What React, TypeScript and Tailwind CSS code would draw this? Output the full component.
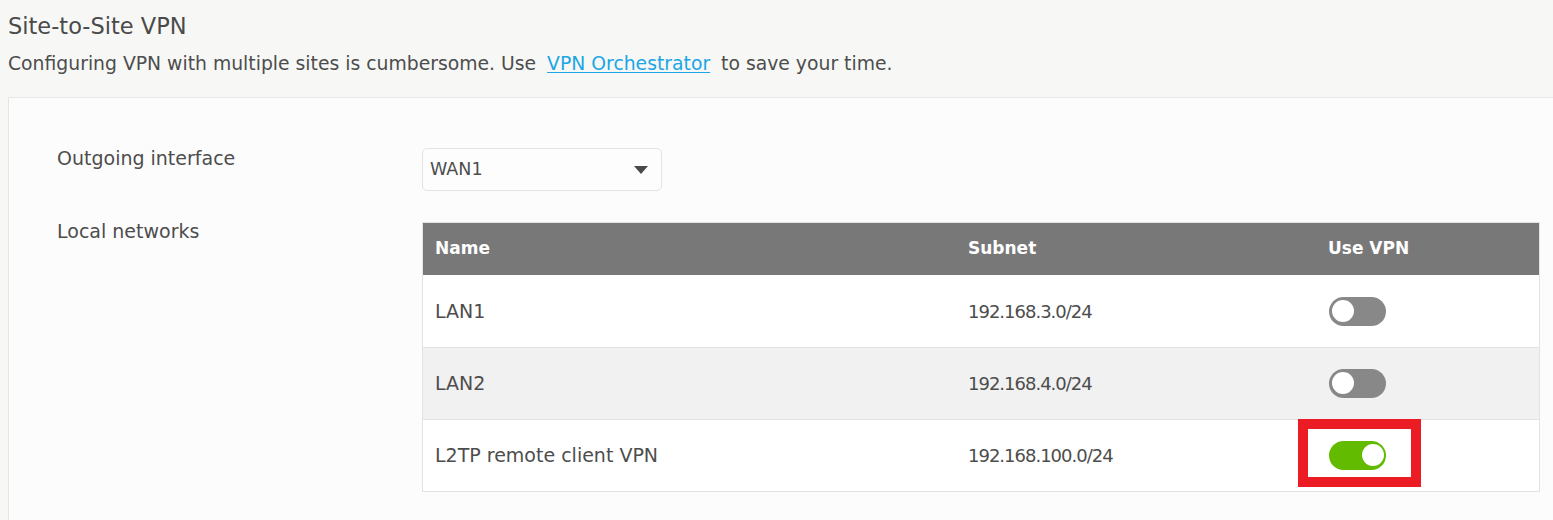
import React, { useState } from 'react';

interface NetworkRow {
  name: string;
  subnet: string;
  useVpn: boolean;
  highlight?: boolean;
}

const rows: NetworkRow[] = [
  { name: 'LAN1', subnet: '192.168.3.0/24', useVpn: false },
  { name: 'LAN2', subnet: '192.168.4.0/24', useVpn: false },
  { name: 'L2TP remote client VPN', subnet: '192.168.100.0/24', useVpn: true, highlight: true },
];

const Toggle: React.FC<{ on: boolean; onClick: () => void }> = ({ on, onClick }) => (
  <button
    onClick={onClick}
    className={`relative block w-[57px] h-[29px] rounded-full ${on ? 'bg-[#63bb00]' : 'bg-[#888888]'}`}
  >
    <span
      className={`absolute top-[3px] w-[22px] h-[22px] rounded-full bg-white ${on ? 'left-[33px]' : 'left-[3px]'}`}
    />
  </button>
);

const App: React.FC = () => {
  const [vpn, setVpn] = useState(rows.map((r) => r.useVpn));
  const flip = (i: number) => setVpn(vpn.map((v, j) => (j === i ? !v : v)));

  return (
    <div className="min-h-[520px] bg-[#f7f8f6] text-[#4d4d4d] font-['DejaVu_Sans',sans-serif] pl-2 overflow-hidden">
      <h1 className="pt-[12px] text-[22.5px] leading-[28px] text-[#4a4a4a]">Site-to-Site VPN</h1>
      <p className="mt-[12px] text-[18.8px] leading-[24px]">
        Configuring VPN with multiple sites is cumbersome. Use{' '}
        <a href="#" className="mx-[5px] text-[#1ba6e4] underline underline-offset-2">VPN Orchestrator</a>{' '}
        to save your time.
      </p>

      {/* Settings card */}
      <div className="mt-[21px] bg-[#fcfcfc] border-l border-t border-[#e6e6e6] pt-[50px] pb-[28px] pl-[48px]">
        <div className="flex">
          <div className="w-[365px] text-[19px] leading-[20px]">Outgoing interface</div>
          <div className="w-[240px] h-[43px] flex items-center justify-between pl-[7px] pr-[13px] rounded-[5px] border border-[#e3e3e3] bg-[#fdfdfd] text-[17.5px]">
            <span>WAN1</span>
            <svg width="14" height="8" viewBox="0 0 14 8"><path d="M0 0h14L7 8z" fill="#4a4a4a" /></svg>
          </div>
        </div>

        <div className="flex mt-[31px]">
          <div className="w-[365px] text-[19px] leading-[18px]">Local networks</div>
          <div className="w-[1118px] border border-[#e3e3e3] text-[19px]">
            <div className="grid grid-cols-[545px_360px_1fr] h-[52px] items-center bg-[#787878] text-white font-bold text-[17px]">
              <div className="pl-[12px]">Name</div>
              <div>Subnet</div>
              <div>Use VPN</div>
            </div>
            {rows.map((r, i) => (
              <div
                key={r.name}
                className={`grid grid-cols-[545px_360px_1fr] h-[72px] items-center ${i > 0 ? 'border-t border-[#e3e3e3]' : ''} ${i === 1 ? 'bg-[#f1f1f1]' : 'bg-white'}`}
              >
                <div className="pl-[12px]">{r.name}</div>
                <div className="text-[18px] tracking-[-1px]">{r.subnet}</div>
                <div className="flex pl-[1px]">
                  <div className="relative">
                    <Toggle on={vpn[i]} onClick={() => flip(i)} />
                    {r.highlight && (
                      <div className="absolute -left-[31px] -top-[22px] w-[123px] h-[68px] border-[10px] border-[#ec1c24] pointer-events-none" />
                    )}
                  </div>
                </div>
              </div>
            ))}
          </div>
        </div>
      </div>
    </div>
  );
};

export default App;
